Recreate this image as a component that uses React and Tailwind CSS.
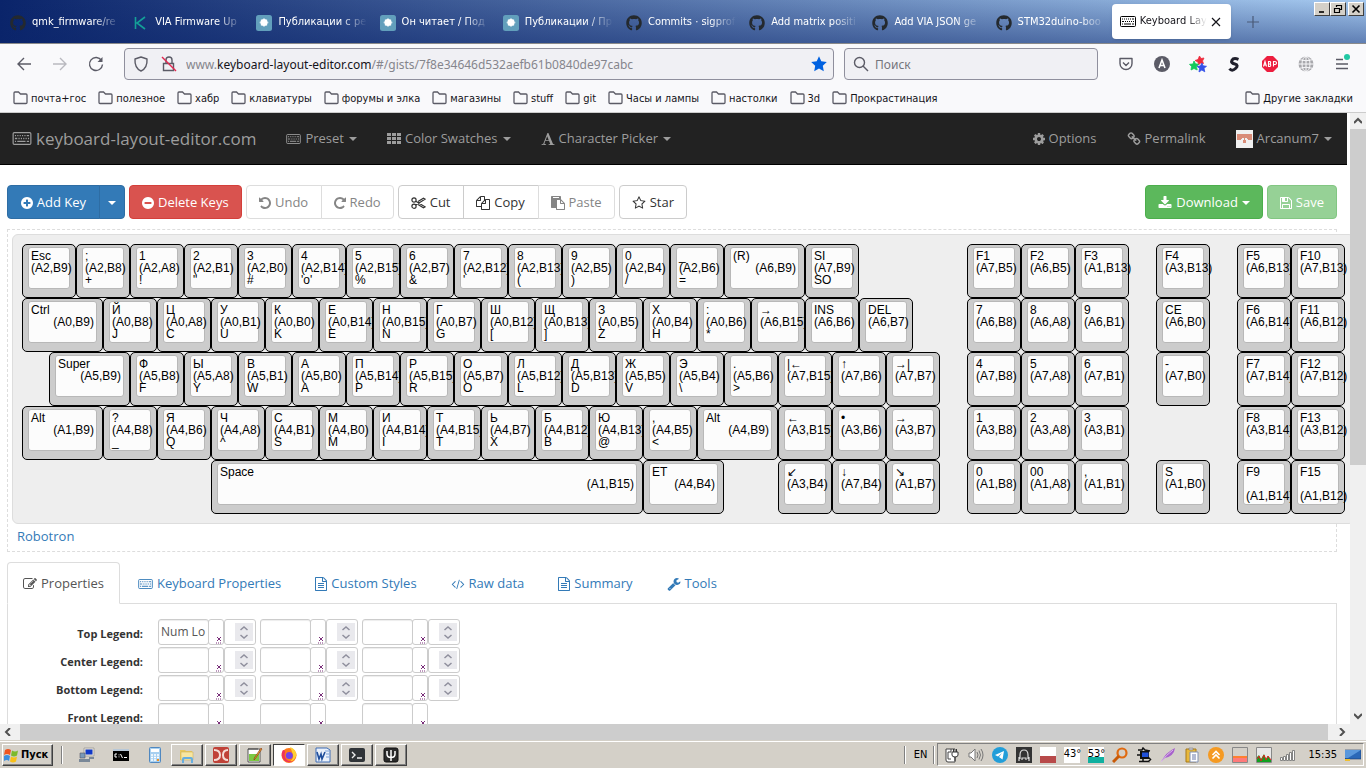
import { FaGithub } from 'react-icons/fa';

// Legends of a key: [top, middle, bottom]. `u` is the width in key units,
// an entry that is just a number is an empty gap of that many units.
const UNIT = 54;

const k = (top, middle = '', bottom = '', u = 1) => ({ legends: [top, middle, bottom], u });

const ROWS = [
  [
    k('Esc', '(A2,B9)'), k(';', '(A2,B8)', '+'), k('1', '(A2,A8)', '!'), k('2', '(A2,B1)', '"'),
    k('3', '(A2,B0)', '#'), k('4', '(A2,B14)', "'o'"), k('5', '(A2,B15)', '%'), k('6', '(A2,B7)', '&'),
    k('7', '(A2,B12)', "'"), k('8', '(A2,B13)', '('), k('9', '(A2,B5)', ')'), k('0', '(A2,B4)', '/'),
    k('_', '(A2,B6)', '='), k('(R)', '(A6,B9)', '', 1.5), k('SI', '(A7,B9)', 'SO'),
    2, k('F1', '(A7,B5)'), k('F2', '(A6,B5)'), k('F3', '(A1,B13)'),
    0.5, k('F4', '(A3,B13)'), 0.5, k('F5', '(A6,B13)'), k('F10', '(A7,B13)'),
  ],
  [
    k('Ctrl', '(A0,B9)', '', 1.5), k('Й', '(A0,B8)', 'J'), k('Ц', '(A0,A8)', 'C'), k('У', '(A0,B1)', 'U'),
    k('К', '(A0,B0)', 'K'), k('Е', '(A0,B14)', 'E'), k('Н', '(A0,B15)', 'N'), k('Г', '(A0,B7)', 'G'),
    k('Ш', '(A0,B12)', '['), k('Щ', '(A0,B13)', ']'), k('З', '(A0,B5)', 'Z'), k('Х', '(A0,B4)', 'H'),
    k(':', '(A0,B6)', '*'), k('→', '(A6,B15)'), k('INS', '(A6,B6)'), k('DEL', '(A6,B7)'),
    1, k('7', '(A6,B8)'), k('8', '(A6,A8)'), k('9', '(A6,B1)'),
    0.5, k('CE', '(A6,B0)'), 0.5, k('F6', '(A6,B14)'), k('F11', '(A6,B12)'),
  ],
  [
    0.5, k('Super', '(A5,B9)', '', 1.5), k('Ф', '(A5,B8)', 'F'), k('Ы', '(A5,A8)', 'Y'), k('В', '(A5,B1)', 'W'),
    k('А', '(A5,B0)', 'A'), k('П', '(A5,B14)', 'P'), k('Р', '(A5,B15)', 'R'), k('О', '(A5,B7)', 'O'),
    k('Л', '(A5,B12)', 'L'), k('Д', '(A5,B13)', 'D'), k('Ж', '(A5,B5)', 'V'), k('Э', '(A5,B4)', '\\'),
    k('.', '(A5,B6)', '>'), k('|←', '(A7,B15)'), k('↑', '(A7,B6)'), k('→|', '(A7,B7)'),
    0.5, k('4', '(A7,B8)'), k('5', '(A7,A8)'), k('6', '(A7,B1)'),
    0.5, k('-', '(A7,B0)'), 0.5, k('F7', '(A7,B14)'), k('F12', '(A7,B12)'),
  ],
  [
    k('Alt', '(A1,B9)', '', 1.5), k('?', '(A4,B8)', '_'), k('Я', '(A4,B6)', 'Q'), k('Ч', '(A4,A8)', '^'),
    k('С', '(A4,B1)', 'S'), k('М', '(A4,B0)', 'M'), k('И', '(A4,B14)', 'I'), k('Т', '(A4,B15)', 'T'),
    k('Ь', '(A4,B7)', 'X'), k('Б', '(A4,B12)', 'B'), k('Ю', '(A4,B13)', '@'), k(',', '(A4,B5)', '<'),
    k('Alt', '(A4,B9)', '', 1.5), k('←', '(A3,B15)'), k('•', '(A3,B6)'), k('→', '(A3,B7)'),
    0.5, k('1', '(A3,B8)'), k('2', '(A3,A8)'), k('3', '(A3,B1)'),
    2, k('F8', '(A3,B14)'), k('F13', '(A3,B12)'),
  ],
  [
    3.5, k('Space', '(A1,B15)', '', 8), k('ET', '(A4,B4)', '', 1.5),
    1, k('↙', '(A3,B4)'), k('↓', '(A7,B4)'), k('↘', '(A1,B7)'),
    0.5, k('0', '(A1,B8)'), k('00', '(A1,A8)'), k(',', '(A1,B1)'),
    0.5, k('S', '(A1,B0)'), 0.5, k('F9', '', '(A1,B14)'), k('F15', '', '(A1,B12)'),
  ],
];

const PATHS = {
  plus: 'M1344 960v-128q0-26-19-45t-45-19h-256v-256q0-26-19-45t-45-19h-128q-26 0-45 19t-19 45v256h-256q-26 0-45 19t-19 45v128q0 26 19 45t45 19h256v256q0 26 19 45t45 19h128q26 0 45-19t19-45v-256h256q26 0 45-19t19-45zm320-64q0 209-103 385.5t-279.5 279.5-385.5 103-385.5-103-279.5-279.5-103-385.5 103-385.5 279.5-279.5 385.5-103 385.5 103 279.5 279.5 103 385.5z',
  minus: 'M1344 960v-128q0-26-19-45t-45-19h-768q-26 0-45 19t-19 45v128q0 26 19 45t45 19h768q26 0 45-19t19-45zm320-64q0 209-103 385.5t-279.5 279.5-385.5 103-385.5-103-279.5-279.5-103-385.5 103-385.5 279.5-279.5 385.5-103 385.5 103 279.5 279.5 103 385.5z',
  undo: 'M1664 896q0 156-61 298t-164 245-245 164-298 61q-172 0-327-72.5t-264-204.5q-7-10-6.5-22.5t8.5-20.5l137-138q10-9 25-9 16 2 23 12 73 95 179 147t225 52q104 0 198.5-40.5t163.5-109.5 109.5-163.5 40.5-198.5-40.5-198.5-109.5-163.5-163.5-109.5-198.5-40.5q-98 0-188 35.5t-160 101.5l137 138q31 30 14 69-17 40-59 40h-448q-26 0-45-19t-19-45v-448q0-42 40-59 39-17 69 14l130 129q107-101 244.5-156.5t284.5-55.5q156 0 298 61t245 164 164 245 61 298z',
  redo: 'M1664 256v448q0 26-19 45t-45 19h-448q-42 0-59-40-17-39 14-69l138-138q-148-137-349-137-104 0-198.5 40.5t-163.5 109.5-109.5 163.5-40.5 198.5 40.5 198.5 109.5 163.5 163.5 109.5 198.5 40.5q119 0 225-52t179-147q7-10 23-12 15 0 25 9l137 138q9 8 9.5 20.5t-7.5 22.5q-109 132-264 204.5t-327 72.5q-156 0-298-61t-245-164-164-245-61-298 61-298 164-245 245-164 298-61q147 0 284.5 55.5t244.5 156.5l130-129q29-31 70-14 39 17 39 59z',
  cog: 'M1152 896q0-106-75-181t-181-75-181 75-75 181 75 181 181 75 181-75 75-181zm512-109v222q0 12-8 23t-20 13l-185 28q-19 54-39 91 35 50 107 138 10 12 10 25t-9 23q-27 37-99 108t-94 71q-12 0-26-9l-138-108q-44 23-91 38-16 136-29 186-7 28-36 28h-222q-14 0-24.5-8.5t-11.5-21.5l-28-184q-49-16-90-37l-141 107q-10 9-25 9-14 0-25-11-126-114-165-168-7-10-7-23 0-12 8-23 15-21 51-66.5t54-70.5q-27-50-41-99l-183-27q-13-2-21-12.5t-8-23.5v-222q0-12 8-23t19-13l186-28q14-46 39-92-40-57-107-138-10-12-10-24 0-10 9-23 26-36 98.5-107.5t94.5-71.5q13 0 26 10l138 107q44-23 91-38 16-136 29-186 7-28 36-28h222q14 0 24.5 8.5t11.5 21.5l28 184q49 16 90 37l142-107q9-9 24-9 13 0 25 10 129 119 165 170 7 8 7 22 0 12-8 23-15 21-51 66.5t-54 70.5q26 50 41 98l183 28q13 2 21 12.5t8 23.5z',
  font: 'M789 559l-170 450q33 0 136.500 2t160.500 2q19 0 57-2-87-253-184-452zm-725 1105l2-79q23-7 56-12.500t57-10.500 49.500-14.500 44.500-29 31-50.500l237-616 280-724h128q8 14 11 21l205 480q33 78 106 257.500t114 274.500q15 34 58 144.500t72 168.500q20 45 35 57 19 15 88 29.500t84 20.500q6 38 6 57 0 5-.5 13.500t-.5 12.500q-63 0-190-8t-191-8q-76 0-215 7t-178 8q0-43 4-78l131-28q1 0 12.500-2.500t15.500-3.500 14.500-4.500 15-6.500 11-8 9-11 2.500-14q0-16-31-96.500t-72-177.500-42-100l-450-2q-26 58-76.500 195.500t-50.500 162.500q0 22 14 37.500t43.500 24.500 48.500 13.500 57 8.500 41 4q1 19 1 58 0 9-2 27-58 0-174.500-10t-174.500-10q-8 0-26.500 4t-21.500 4q-80 14-188 14z',
  link: 'M1520 1216q0-40-28-68l-208-208q-28-28-68-28-42 0-72 32 3 3 19 18.500t21.500 21.500 15 19 13 25.500 3.500 27.500q0 40-28 68t-68 28q-15 0-27.500-3.500t-25.500-13-19-15-21.500-21.500-18.500-19q-33 31-33 73 0 40 28 68l206 207q27 27 68 27 40 0 68-26l147-146q28-28 28-67zm-703-705q0-40-28-68l-206-207q-28-28-68-28-39 0-68 27l-147 146q-28 28-28 67 0 40 28 68l208 208q27 27 68 27 42 0 72-31-3-3-19-18.500t-21.500-21.500-15-19-13-25.500-3.500-27.500q0-40 28-68t68-28q15 0 27.500 3.500t25.500 13 19 15 21.500 21.500 18.500 19q33-31 33-73zm895 705q0 120-85 203l-147 146q-83 83-203 83-121 0-204-85l-206-207q-83-83-83-203 0-123 88-209l-88-88q-86 88-208 88-120 0-204-84l-208-208q-84-84-84-204t85-203l147-146q83-83 203-83 121 0 204 85l206 207q83 83 83 203 0 123-88 209l88 88q86-88 208-88 120 0 204 84l208 208q84 84 84 204z',
  star: 'M1201 1004l306-297-422-62-189-382-189 382-422 62 306 297-73 421 378-199 377 199zm527-357q0 22-26 48l-363 354 86 500q1 7 1 20 0 50-41 50-19 0-40-12l-449-236-449 236q-22 12-40 12-21 0-31.5-14.5t-10.5-35.5q0-6 2-20l86-500-364-354q-25-27-25-48 0-37 56-46l502-73 225-455q19-41 49-41t49 41l225 455 502 73q56 9 56 46z',
  download: 'M1344 1344q0-26-19-45t-45-19-45 19-19 45 19 45 45 19 45-19 19-45zm256 0q0-26-19-45t-45-19-45 19-19 45 19 45 45 19 45-19 19-45zm128-224v320q0 40-28 68t-68 28h-1472q-40 0-68-28t-28-68v-320q0-40 28-68t68-28h465l135 136q58 56 136 56t136-56l136-136h464q40 0 68 28t28 68zm-325-569q17 41-14 70l-448 448q-18 19-45 19t-45-19l-448-448q-31-29-14-70 17-39 59-39h256v-448q0-26 19-45t45-19h256q26 0 45 19t19 45v448h256q42 0 59 39z',
  code: 'M681 1399l-50 50q-10 10-23 10t-23-10l-466-466q-10-10-10-23t10-23l466-466q10-10 23-10t23 10l50 50q10 10 10 23t-10 23l-393 393 393 393q10 10 10 23t-10 23zm591-1067l-373 1291q-4 13-15.5 19.5t-23.5 2.5l-62-17q-13-4-19.5-15.5t-2.5-24.5l373-1291q4-13 15.5-19.5t23.5-2.5l62 17q13 4 19.5 15.5t2.5 24.5zm657 651l-466 466q-10 10-23 10t-23-10l-50-50q-10-10-10-23t10-23l393-393-393-393q-10-10-10-23t10-23l50-50q10-10 23-10t23 10l466 466q10 10 10 23t-10 23z',
  wrench: 'M448 1472q0-26-19-45t-45-19-45 19-19 45 19 45 45 19 45-19 19-45zm644-420l-682 682q-37 37-90 37-52 0-91-37l-106-108q-38-36-38-90 0-53 38-91l681-681q39 98 114.5 173.5t173.5 114.5zm634-435q0 39-23 106-47 134-164.5 217.5t-258.5 83.5q-185 0-316.5-131.5t-131.5-316.5 131.5-316.5 316.5-131.5q58 0 121.5 16.5t107.5 46.5q16 11 16 28t-16 28l-293 169v224l193 107q5-3 79-48.5t135.5-81 70.5-35.5q15 0 23.5 10t8.5 25z',
  edit: 'M888 1184l116-116-152-152-116 116v56h96v96h56zm440-720q-16-16-33 1l-350 350q-17 17-1 33t33-1l350-350q17-17 1-33zm80 594v190q0 119-84.5 203.5t-203.5 84.5h-832q-119 0-203.5-84.5t-84.5-203.5v-832q0-119 84.5-203.5t203.5-84.5h832q63 0 117 25 15 7 18 23 3 17-9 29l-49 49q-14 14-32 8-23-6-45-6h-832q-66 0-113 47t-47 113v832q0 66 47 113t113 47h832q66 0 113-47t47-113v-126q0-13 9-22l64-64q15-15 35-7t20 29zm-96-738l288 288-672 672h-288v-288zm444 132l-92 92-288-288 92-92q28-28 68-28t68 28l152 152q28 28 28 68t-28 68z',
  file: 'M1596 380q28 28 48 76t20 88v1152q0 40-28 68t-68 28h-1344q-40 0-68-28t-28-68v-1600q0-40 28-68t68-28h896q40 0 88 20t76 48zm-444-244v376h376q-10-29-22-41l-313-313q-12-12-41-22zm384 1528v-1024h-416q-40 0-68-28t-28-68v-416h-768v1536h1280zm-1024-864q0-14 9-23t23-9h704q14 0 23 9t9 23v64q0 14-9 23t-23 9h-704q-14 0-23-9t-9-23v-64zm736 224q14 0 23 9t9 23v64q0 14-9 23t-23 9h-704q-14 0-23-9t-9-23v-64q0-14 9-23t23-9h704zm0 256q14 0 23 9t9 23v64q0 14-9 23t-23 9h-704q-14 0-23-9t-9-23v-64q0-14 9-23t23-9h704z',
  copy: 'M1696 384q40 0 68 28t28 68v1216q0 40-28 68t-68 28h-960q-40 0-68-28t-28-68v-288h-544q-40 0-68-28t-28-68v-672q0-40 20-88t48-76l408-408q28-28 76-48t88-20h416q40 0 68 28t28 68v328q68-40 128-40h416zm-544 213l-299 299h299v-299zm-640-384l-299 299h299v-299zm196 647l316-316v-416h-384v416q0 40-28 68t-68 28h-416v640h512v-256q0-40 20-88t48-76zm956 804v-1152h-384v416q0 40-28 68t-68 28h-416v640h896z',
  paste: 'M768 1664h896v-640h-416q-40 0-68-28t-28-68v-416h-384v1152zm256-1440v-64q0-13-9.5-22.5t-22.5-9.5h-704q-13 0-22.5 9.5t-9.5 22.5v64q0 13 9.5 22.5t22.5 9.5h704q13 0 22.5-9.5t9.5-22.5zm256 672h299l-299-299v299zm512 128v672q0 40-28 68t-68 28h-960q-40 0-68-28t-28-68v-160h-544q-40 0-68-28t-28-68v-1344q0-40 28-68t68-28h1088q40 0 68 28t28 68v328q21 13 36 28l408 408q28 28 48 76t20 88z',
  save: 'M512 1536h768v-384h-768v384zm896 0h128v-896q0-14-10-38.5t-20-34.5l-281-281q-10-10-34-20t-39-10v416q0 40-28 68t-68 28h-576q-40 0-68-28t-28-68v-416h-128v1280h128v-416q0-40 28-68t68-28h832q40 0 68 28t28 68v416zm-384-928v-320q0-13-9.5-22.5t-22.5-9.5h-192q-13 0-22.5 9.5t-9.5 22.5v320q0 13 9.5 22.5t22.5 9.5h192q13 0 22.5-9.5t9.5-22.5zm640 32v928q0 40-28 68t-68 28h-1344q-40 0-68-28t-28-68v-1344q0-40 28-68t68-28h928q40 0 88 20t76 48l280 280q28 28 48 76t20 88z',
};

// Glyphs on a 1792 grid: narrow ones are 12px wide, full ones 14px
function Narrow({ name }) {
  return (
    <svg viewBox="128 0 1536 1792" className="h-3.5 w-3 shrink-0" fill="currentColor">
      <path d={PATHS[name]} />
    </svg>
  );
}

function Wide({ name, box = '0 0 1792 1792' }) {
  return (
    <svg viewBox={box} className="h-3.5 w-3.5 shrink-0" fill="currentColor">
      <path d={PATHS[name]} />
    </svg>
  );
}

function KeyboardIcon({ className = 'h-[10px] w-[15px]' }) {
  return (
    <svg viewBox="0 0 16 11" className={`shrink-0 ${className}`} fill="none" stroke="currentColor">
      <rect x="0.5" y="0.5" width="15" height="10" rx="1" />
      <path d="M2 3h1m1 0h1m1 0h1m1 0h1m1 0h1m1 0h2M2 5.5h2m1 0h1m1 0h1m1 0h1m1 0h1m1 0h1M2 8h1m1 0h7m1 0h2" strokeWidth="1.1" />
    </svg>
  );
}

function GridIcon() {
  return (
    <svg viewBox="0 0 14 11" className="h-[11px] w-3.5 shrink-0" fill="currentColor">
      {[0, 5, 10].map((x) => [0, 4, 8].map((y) => <rect key={`${x}-${y}`} x={x} y={y} width="4" height="3" />))}
    </svg>
  );
}

function CutIcon() {
  return (
    <svg viewBox="0 0 15 14" className="h-3.5 w-[15px] shrink-0" fill="none" stroke="currentColor" strokeWidth="1.2">
      <circle cx="3" cy="4" r="2.1" />
      <circle cx="3" cy="10.2" r="2.1" />
      <path d="M4.8 5.2 14 10.8l-1.6 1L7 8.5M4.8 9 14 3.2l-1.6-1L7 5.5" />
    </svg>
  );
}

function Caret() {
  return <span className="block h-0 w-0 shrink-0 border-x-4 border-t-4 border-x-transparent" />;
}

/* ---------- browser chrome ---------- */

function HabrIcon() {
  return (
    <svg viewBox="0 0 16 16" className="h-4 w-4 shrink-0">
      <rect width="16" height="16" rx="2.5" fill="#629fbc" />
      <circle cx="8" cy="7.500" r="3.600" fill="#fff" />
      <path d="M8 3v9M3.500 7.500h9M5 4.500l6 6M11 4.500l-6 6" stroke="#fff" strokeWidth="1.500" strokeOpacity=".5" />
    </svg>
  );
}

function ViaIcon() {
  return (
    <svg viewBox="0 0 16 16" className="h-4 w-4 shrink-0" fill="none" stroke="#14a098" strokeWidth="1.6">
      <path d="M2.500 2v12M12 2 4 8l8 6" />
    </svg>
  );
}

const HubIcon = () => <FaGithub className="h-4 w-4 shrink-0 text-[#24292e]" />;

const TABS = [
  [HubIcon, 'qmk_firmware/re'],
  [ViaIcon, 'VIA Firmware Up'],
  [HabrIcon, 'Публикации с ре'],
  [HabrIcon, 'Он читает / Под'],
  [HabrIcon, 'Публикации / Пр'],
  [HubIcon, 'Commits · sigprof'],
  [HubIcon, 'Add matrix positi'],
  [HubIcon, 'Add VIA JSON ge'],
  [HubIcon, 'STM32duino-boo'],
];

const FADE = 'min-w-0 flex-1 overflow-hidden whitespace-nowrap [mask-image:linear-gradient(to_right,black_70%,transparent)]';

function WindowButton({ label, children }) {
  return (
    <button
      type="button"
      aria-label={label}
      className="flex h-3.5 w-4 items-center justify-center border border-white border-r-[#404040] border-b-[#404040] bg-[#d4d0c8] text-black"
    >
      <svg viewBox="0 0 10 10" className="h-2.5 w-2.5" fill="none" stroke="currentColor" strokeWidth="1.6">
        {children}
      </svg>
    </button>
  );
}

function TabStrip() {
  return (
    <div className="flex h-11 shrink-0 border-b border-[#8a8a8a] bg-[linear-gradient(to_bottom,transparent,rgba(10,36,106,0.45)),linear-gradient(to_right,#0a246a,#a6caf0)] text-[11px]">
      <div className="grid min-w-0 flex-1 grid-cols-10 pl-px">
        {TABS.map(([Icon, title], i) => (
          <button key={i} type="button" className="flex min-w-0 items-center gap-1.5 pt-0.5 pl-[9px] pr-1 text-left text-white">
            <Icon />
            <span className={FADE}>{title}</span>
          </button>
        ))}
        <div className="flex min-w-0 px-0.5 py-1">
          <div className="flex min-w-0 flex-1 items-center gap-1 rounded bg-white pl-2 pr-2.5 text-[#15141a] shadow">
            <KeyboardIcon className="h-[11px] w-4 text-black" />
            <button type="button" className={`text-left ${FADE}`}>Keyboard Layo</button>
            <button type="button" aria-label="Закрыть вкладку">
              <svg viewBox="0 0 10 10" className="h-2.5 w-2.5" stroke="currentColor" strokeWidth="1.2">
                <path d="M1 1l8 8M9 1 1 9" />
              </svg>
            </button>
          </div>
        </div>
      </div>
      <div className="flex w-[133px] shrink-0 justify-between pl-3.5 pr-0.5">
        <button type="button" aria-label="Новая вкладка" className="text-[#4a5a78]">
          <svg viewBox="0 0 12 12" className="h-3 w-3" stroke="currentColor" strokeWidth="1.2">
            <path d="M6 0v12M0 6h12" />
          </svg>
        </button>
        <div className="flex pt-0.5">
          <WindowButton label="Свернуть"><path d="M2 8h5" /></WindowButton>
          <WindowButton label="Восстановить">
            <path d="M3.500 3V1.500h5v4H7M1.500 4.500h5v4h-5z" strokeWidth="1.2" />
          </WindowButton>
          <span className="w-0.5" />
          <WindowButton label="Закрыть"><path d="M1.500 1.500l7 7M8.500 1.500l-7 7" /></WindowButton>
        </div>
      </div>
    </div>
  );
}

function ToolButton({ label, className = '', children }) {
  return (
    <button type="button" aria-label={label} className={`flex h-8 w-9 items-center justify-center text-[#5b5b66] ${className}`}>
      <svg viewBox="0 0 16 16" className="h-4 w-4 overflow-visible" fill="none" stroke="currentColor" strokeWidth="1.4">
        {children}
      </svg>
    </button>
  );
}

function AddressBar() {
  return (
    <div className="flex h-10 shrink-0 items-center bg-[#f9f9fb] px-1.5">
      <ToolButton label="Назад"><path d="M15 8H2M8 2 2 8l6 6" /></ToolButton>
      <ToolButton label="Вперёд" className="opacity-40"><path d="M1 8h13M8 2l6 6-6 6" /></ToolButton>
      <ToolButton label="Обновить">
        <path d="M13.500 4.500A6.500 6.500 0 1 0 14.500 8.500" />
        <path d="M14.500 1v5h-5z" fill="currentColor" stroke="none" />
      </ToolButton>
      <div className="ml-2.5 flex h-8 min-w-0 flex-1 items-center rounded border border-[#8f8f9d] bg-[#f0f0f4] pl-2 pr-1.5">
        <svg viewBox="0 0 16 16" className="h-4 w-4 shrink-0" fill="none" stroke="#5b5b66" strokeWidth="1.4">
          <path d="M8 1l6 2c.4 6-1.500 10-6 12C3.500 13 1.600 9 2 3z" strokeLinejoin="round" />
        </svg>
        <svg viewBox="0 0 16 16" className="ml-3 mr-[9px] h-4 w-4 shrink-0" fill="none" stroke="#5b5b66" strokeWidth="1.4">
          <path d="M2.500 7.500h10v7h-10zM5 7.500V4a3 3 0 0 1 6 0v3.500" />
          <path d="M1 1l14 14" stroke="#e22850" />
        </svg>
        <div role="textbox" aria-label="Адрес" className="min-w-0 flex-1 overflow-hidden pt-0.5 whitespace-nowrap font-['Noto_Sans',sans-serif] text-xs text-[#85858c]">
          www.<span className="text-[#15141a]">keyboard-layout-editor.com</span>/#/gists/7f8e34646d532aefb61b0840de97cabc
        </div>
        <button type="button" aria-label="Изменить закладку">
          <svg viewBox="0 0 16 16" className="h-4 w-4" fill="#0061e0">
            <path d="M8 0.300l2.300 5 5.500.7-4 3.800 1 5.500L8 12.600l-4.800 2.700 1-5.500-4-3.800 5.500-.7z" />
          </svg>
        </button>
      </div>
      <label className="mx-2.5 flex h-8 w-[254px] items-center gap-1.5 rounded border border-[#8f8f9d] bg-[#f0f0f4] px-2 text-[#5b5b66]">
        <svg viewBox="0 0 16 16" className="h-4 w-4 shrink-0" fill="none" stroke="currentColor" strokeWidth="1.4">
          <circle cx="6.500" cy="6.500" r="5" />
          <path d="M10 10l5 5" />
        </svg>
        <input type="search" aria-label="Поиск" placeholder="Поиск" className="w-full min-w-0 bg-transparent pt-0.5 font-['Noto_Sans',sans-serif] text-xs outline-none placeholder:text-[#74747c]" />
      </label>
      <ToolButton label="Pocket">
        <path d="M2 2.500h12v5a6 6 0 0 1-12 0zM5 6.500l3 3 3-3" strokeLinejoin="round" />
      </ToolButton>
      <ToolButton label="Аккаунт">
        <circle cx="8" cy="8" r="8" fill="#5b5b66" stroke="none" />
        <path d="M5 12l3-8 3 8M6.200 9.500h3.600" stroke="#fff" strokeWidth="1.600" />
      </ToolButton>
      <ToolButton label="Расширение">
        <path d="M9.500 0l1.500 2.500 3-.5-1.500 3 1 2.500-3-.5L8.500 9 8 6 5 4.500l3-1z" fill="#ee2b3c" stroke="#ee2b3c" strokeWidth=".8" />
        <path d="M4 5l1.500 2.800 3 .5-2 2.200.7 3.500-3.200-1.500L1 14l.5-3.500L-.5 8.300 3 8z" fill="#13c95b" stroke="#13c95b" strokeWidth=".8" />
        <path d="M12 7l1 2.800 3.500.5-2.500 2 .8 3.500L11.800 14 9 16l.5-3.700L7 10.300l3.300-.3z" fill="#3451e8" stroke="#3451e8" strokeWidth=".8" />
      </ToolButton>
      <ToolButton label="Stylus">
        <path d="M12.500 3.300Q7.500 1.500 6 4.200T8.800 8t.7 4.500-6 .2" stroke="#20202c" strokeWidth="3" />
      </ToolButton>
      <ToolButton label="Adblock Plus">
        <path d="M5 0h6l5 5v6l-5 5H5l-5-5V5z" fill="#ed1e3f" stroke="none" />
        <path d="M1.500 10.500l1.500-5 1.500 5M2 9h2M6.500 5.500v5h1.500q1.500-1.200 0-2.500 1.300-1.200 0-2.500zM6.500 8H8M11.500 10.500v-5q3-.2 3 1.500t-3 1.500" stroke="#fff" strokeWidth="1.100" />
      </ToolButton>
      <ToolButton label="Сеть">
        <circle cx="8" cy="8" r="7.500" fill="#a8a8ac" stroke="none" />
        <path d="M8 0v16M0 8h16M2 3.800q6 2 12 0M2 12.200q6-2 12 0" stroke="#f9f9fb" strokeWidth="1" />
        <ellipse cx="8" cy="8" rx="4" ry="7.500" stroke="#f9f9fb" strokeWidth="1" />
      </ToolButton>
      <ToolButton label="Меню">
        <path d="M2 3.500h7M2 8h12M2 12.500h12" />
        <circle cx="13" cy="1" r="3" fill="#22c8a4" stroke="none" />
      </ToolButton>
    </div>
  );
}

const BOOKMARKS = [
  'почта+гос', 'полезное', 'хабр', 'клавиатуры', 'форумы и элка', 'магазины',
  'stuff', 'git', 'Часы и лампы', 'настолки', '3d', 'Прокрастинация',
];

function Bookmark({ title }) {
  return (
    <button type="button" className="flex items-center gap-[3px] whitespace-nowrap">
      <svg viewBox="0 0 15 14" className="h-3.5 w-[15px]" fill="none" stroke="#5b5b66" strokeWidth="1.300">
        <path d="M1 2q0-1 1-1h3.500l2 2H13q1 0 1 1v7.500q0 1-1 1H2q-1 0-1-1z" />
      </svg>
      <span className="pt-0.5">{title}</span>
    </button>
  );
}

function BookmarksBar() {
  return (
    <div className="flex h-[29px] shrink-0 items-center gap-3 border-b border-[#ccc] bg-[#f9f9fb] px-[13px] text-[11px] text-[#15141a]">
      {BOOKMARKS.map((b) => <Bookmark key={b} title={b} />)}
      <div className="ml-auto"><Bookmark title="Другие закладки" /></div>
    </div>
  );
}

/* ---------- page ---------- */

function NavLink({ icon, children, caret }) {
  return (
    <a href="#" className="flex h-[51px] items-center gap-1 px-[15px] text-[#9d9d9d]">
      {icon}
      <span className={caret ? 'mr-px' : ''}>{children}</span>
      {caret && <Caret />}
    </a>
  );
}

function Navbar() {
  return (
    <nav className="mr-[3px] flex h-[52px] items-center border-b border-black bg-[#222] text-[13px]">
      <a href="#" className="flex items-center gap-1 pl-3 pr-[15px] text-[17px] text-[#9d9d9d]">
        <KeyboardIcon className="h-[13px] w-5" />
        keyboard-layout-editor.com
      </a>
      <NavLink icon={<KeyboardIcon />} caret>Preset</NavLink>
      <NavLink icon={<GridIcon />} caret>Color Swatches</NavLink>
      <NavLink icon={<Wide name="font" />} caret>Character Picker</NavLink>
      <div className="ml-auto flex">
        <NavLink icon={<Narrow name="cog" />}>Options</NavLink>
        <NavLink icon={<Wide name="link" />}>Permalink</NavLink>
        <NavLink
          icon={
            <svg viewBox="0 0 17 18" className="h-[18px] w-[17px]">
              <path d="M0 0h17v18H0z" fill="#f0f0f0" />
              <path d="M1 4h15v6h-4V9H5v1H1z" fill="#d98c78" />
              <path d="M7 8h3v5H7z" fill="#d98c78" />
              <path d="M6 8h2v2H6zM9 8h2v2H9z" fill="#f0f0f0" />
            </svg>
          }
          caret
        >
          Arcanum7
        </NavLink>
      </div>
    </nav>
  );
}

const BTN = 'flex h-[34px] items-center justify-center gap-1 border px-3 pt-0.5';

function Toolbar() {
  return (
    <div className="flex gap-1 text-[13px] text-[#333]">
      <div className="flex text-white">
        <button type="button" className={`${BTN} w-[93px] rounded-l border-[#2e6da4] bg-[#337ab7]`}><Narrow name="plus" />Add Key</button>
        <button type="button" aria-label="Add special key" className="-ml-px flex h-[34px] w-[26px] items-center justify-center rounded-r border border-[#2e6da4] bg-[#337ab7] pt-0.5"><Caret /></button>
      </div>
      <button type="button" className={`${BTN} rounded border-[#d43f3a] bg-[#d9534f] text-white`}><Narrow name="minus" />Delete Keys</button>
      <div className="flex text-[#858585]">
        <button type="button" className={`${BTN} w-[76px] rounded-l border-[#ddd] bg-white`}><Narrow name="undo" />Undo</button>
        <button type="button" className={`${BTN} -ml-px rounded-r border-[#ddd] bg-white`}><Narrow name="redo" />Redo</button>
      </div>
      <div className="flex">
        <button type="button" className={`${BTN} rounded-l border-[#ccc] bg-white`}><CutIcon />Cut</button>
        <button type="button" className={`${BTN} -ml-px w-[76px] border-[#ccc] bg-white`}><Wide name="copy" />Copy</button>
        <button type="button" className={`${BTN} -ml-px rounded-r border-[#ddd] bg-white text-[#858585]`}><Wide name="paste" />Paste</button>
      </div>
      <button type="button" className={`${BTN} rounded border-[#ccc] bg-white`}><Wide name="star" />Star</button>
      <div className="ml-auto flex gap-1 text-white">
        <button type="button" className={`${BTN} rounded border-[#4cae4c] bg-[#5cb85c]`}><Wide name="download" />Download<Caret /></button>
        <button type="button" className={`${BTN} rounded border-[#82c682] bg-[#96d196]`}><Narrow name="save" />Save</button>
      </div>
    </div>
  );
}

function Key({ legends, u }) {
  const [top, middle, bottom] = legends;
  return (
    <div className="h-[54px] shrink-0 rounded-[5px] border border-black bg-[#ccc] px-[5px] pt-0.5" style={{ width: u * UNIT }}>
      <div className="h-[42px] whitespace-nowrap rounded-[3px] border border-[#b8b8b8] bg-[#fcfcfc] p-0.5">
        <div className="h-3">{top}</div>
        <div className={u > 1 ? 'h-3 text-right' : 'h-3'}>{middle}</div>
        <div className="h-3">{bottom}</div>
      </div>
    </div>
  );
}

function Board() {
  return (
    <div className="w-max rounded-md border border-[#ddd] bg-[#eee] p-[9px] font-['Liberation_Sans',Arial,sans-serif] text-xs leading-3 text-black">
      {ROWS.map((row, r) => (
        <div key={r} className="flex h-[54px]">
          {row.map((item, i) =>
            typeof item === 'number'
              ? <div key={i} className="shrink-0" style={{ width: item * UNIT }} />
              : <Key key={i} {...item} />
          )}
        </div>
      ))}
    </div>
  );
}

const PANES = [
  [<Wide name="edit" />, 'Properties'],
  [<KeyboardIcon />, 'Keyboard Properties'],
  [<Narrow name="file" />, 'Custom Styles'],
  [<Wide name="code" box="0 0 2048 1792" />, 'Raw data'],
  [<Narrow name="file" />, 'Summary'],
  [<Wide name="wrench" />, 'Tools'],
];

function PaneTabs() {
  return (
    <div role="tablist" className="flex gap-0.5 border-b border-[#ddd] text-[13px]">
      {PANES.map(([icon, title], i) => (
        <button
          key={title}
          type="button"
          role="tab"
          aria-selected={i === 0}
          className={`-mb-px flex h-[42px] items-center gap-1 rounded-t border px-[15px] pt-0.5 ${
            i === 0 ? 'border-[#ddd] border-b-white bg-white text-[#555]' : 'border-transparent text-[#337ab7]'
          }`}
        >
          {icon}
          {title}
        </button>
      ))}
    </div>
  );
}

function LegendInput({ label, value, size }) {
  return (
    <div className="flex h-[26px] w-[98px]">
      <input
        type="text"
        aria-label={label}
        defaultValue={value}
        className="w-[51px] rounded-[3px] border border-[#ccc] px-0.5 text-xs text-[#555] shadow-[inset_0_1px_1px_rgba(0,0,0,0.075)] outline-none"
      />
      <a href="#" aria-label={`Clear ${label}`} className="-ml-px flex w-4 items-end justify-end rounded-[3px] border border-[#ccc] pr-px text-[#7a2f7a]">
        <svg viewBox="0 0 6 7" className="h-[7px] w-1.5" stroke="currentColor" fill="none">
          <path d="M1 0l4 4M5 0 1 4" />
          <path d="M0 6h6" strokeDasharray="1 1" />
        </svg>
      </a>
      {size && (
        <div className="flex w-8 justify-end rounded-[3px] border border-[#ccc] py-[3px] pr-0.5">
          <input type="number" aria-label={`${label} size`} className="w-2 min-w-0 flex-1 appearance-none outline-none [&::-webkit-inner-spin-button]:appearance-none" />
          <span className="flex w-[18px] flex-col items-center justify-center gap-[3px] bg-[#e9e9ed] text-[#8f8f9d]">
            <svg viewBox="0 0 8 5" className="h-[5px] w-2" fill="none" stroke="currentColor" strokeWidth="1.500"><path d="M0.500 4 4 1l3.500 3" /></svg>
            <svg viewBox="0 0 8 5" className="h-[5px] w-2" fill="none" stroke="currentColor" strokeWidth="1.500"><path d="M0.500 1 4 4l3.500-3" /></svg>
          </span>
        </div>
      )}
    </div>
  );
}

function LegendRow({ name, value = '', size = true }) {
  return (
    <div className="flex h-[26px] gap-1">
      <span className="mr-[11px] w-[135px] text-right text-[11px] leading-[30px] font-bold text-[#333]">{name} Legend:</span>
      {['left', 'center', 'right'].map((pos, i) => (
        <LegendInput key={pos} label={`${name} ${pos} legend`} value={i === 0 ? value : ''} size={size} />
      ))}
    </div>
  );
}

function Page() {
  return (
    <main className="min-w-0 flex-1 overflow-hidden bg-white font-['Open_Sans',sans-serif]">
      <Navbar />
      <div className="pl-[7px] pr-[13px] pt-5">
        <Toolbar />
        <div className="mt-2.5 border border-dashed border-[#ddd] pl-1 pt-1">
          <Board />
          <a href="#" className="ml-[5px] block h-[27px] w-max pt-0.5 text-[13px] leading-5 text-[#337ab7]">Robotron</a>
        </div>
        <div className="mt-2.5">
          <PaneTabs />
          <form className="flex h-80 flex-col gap-0.5 border-x border-[#ddd] pt-[15px]">
            <LegendRow name="Top" value="Num Lo" />
            <LegendRow name="Center" />
            <LegendRow name="Bottom" />
            <LegendRow name="Front" size={false} />
          </form>
        </div>
      </div>
    </main>
  );
}

function ScrollArrow({ label, d, className }) {
  return (
    <button type="button" aria-label={label} className={`flex items-center justify-center bg-[#f0f0f0] text-[#505050] ${className}`}>
      <svg viewBox="0 0 8 8" className="h-2 w-2" fill="none" stroke="currentColor" strokeWidth="2">
        <path d={d} />
      </svg>
    </button>
  );
}

function VerticalScroll() {
  return (
    <div className="flex w-4 shrink-0 flex-col bg-[#f0f0f0]">
      <ScrollArrow label="Вверх" d="M0 6l4-4 4 4" className="h-4" />
      <div className="h-[55%] bg-[#cdcdcd]" />
      <ScrollArrow label="Вниз" d="M0 2l4 4 4-4" className="mt-auto h-4" />
    </div>
  );
}

function HorizontalScroll() {
  return (
    <div className="flex h-4 shrink-0 bg-[#f0f0f0] pr-4">
      <ScrollArrow label="Влево" d="M6 0 2 4l4 4" className="w-5 pr-1" />
      <div className="flex-1 bg-[#cdcdcd]" />
      <ScrollArrow label="Вправо" d="M2 0l4 4-4 4" className="w-[22px] pl-1.5" />
    </div>
  );
}

/* ---------- taskbar ---------- */

function Pic({ children }) {
  return <svg viewBox="0 0 16 16" className="h-4 w-4 shrink-0">{children}</svg>;
}

function Separator() {
  return <span className="block h-[18px] w-0.5 shrink-0 border-l border-[#808080] bg-white" />;
}

const RAISED = 'border border-white border-r-[#404040] border-b-[#404040] shadow-[inset_-1px_-1px_0_#808080]';

const TASKS = [
  ['Проводник', (
    <Pic>
      <path d="M1 3h5l1 1h6v9H1z" fill="#e8c860" />
      <path d="M2 5h12v8H2z" fill="#f7e6a0" stroke="#c8a848" strokeWidth=".5" />
      <path d="M3 16v-4q0-2 2-2h7q2 0 2 2v4h-2v-3q0-1-1-1H6q-1 0-1 1v3z" fill="#66aee0" />
    </Pic>
  )],
  ['Double Commander', (
    <Pic>
      <rect width="16" height="16" rx="2" fill="#c04238" />
      <path d="M1 3q6 0 6 5t-6 5M15 3q-5 0-5 5t5 5" fill="none" stroke="#f5ddd8" strokeWidth="2" />
    </Pic>
  )],
  ['Блокнот', (
    <Pic>
      <path d="M1 2h12v13H1z" fill="#fff" stroke="#555" />
      <path d="M2 7h10v7H2z" fill="#7cc943" />
      <path d="M2 1v2M4 1v2M6 1v2M8 1v2M10 1v2" stroke="#333" strokeWidth=".8" />
      <path d="M15 2 8 12l-1 1 .3-2L14 1z" fill="#f0a030" stroke="#803010" strokeWidth=".6" />
    </Pic>
  )],
  ['Firefox', (
    <Pic>
      <circle cx="8" cy="8.500" r="7.500" fill="#ff7a1a" />
      <path d="M9 0q6 2 6.500 8-2 6-7.500 7 5-3 4-7T9 0z" fill="#ffcf33" />
      <path d="M1 5q-1 6 3 9 4 2.500 8 0-5 1-7-2T4 6 2 3z" fill="#f0325a" />
      <circle cx="8.300" cy="8.500" r="3.500" fill="#7542e5" />
    </Pic>
  )],
  ['Word', (
    <Pic>
      <path d="M1 1h11l3 2v12H1z" fill="#eaf1fb" stroke="#3e6db5" />
      <path d="M10 4h4M11 7h3M11 10h3" stroke="#7aa0d8" />
      <path d="M2 5l2 7 2-5 1 5 3-7" fill="none" stroke="#1f4e9c" strokeWidth="1.600" />
    </Pic>
  )],
  ['Терминал', (
    <Pic>
      <rect y="1" width="16" height="14" rx="2" fill="#303438" />
      <path d="M3 5l3 3-3 3M8 11h5" fill="none" stroke="#eee" strokeWidth="1.400" />
    </Pic>
  )],
  ['QMK Toolbox', (
    <Pic>
      <rect x="1" y="1" width="14" height="14" rx="2" fill="#2b2b2b" stroke="#111" />
      <path d="M8 3v11M4 4v3q0 3.500 4 3.500T12 7V4" fill="none" stroke="#fff" strokeWidth="1.500" />
    </Pic>
  )],
];

function Tray() {
  return (
    <div className="flex h-[23px] items-center gap-2 border border-[#808080] border-r-white border-b-white pl-1.5 pr-0.5">
      <Pic>
        <path d="M2 2h9v13H4q-2 0-2-2z" fill="#fff" stroke="#444" />
        <path d="M7 2v3H4v7h3" fill="none" stroke="#444" />
        <path d="M8 5h6v3q0 2-3 2T8 8zM9.500 2v3M12.500 2v3M11 10v4" fill="#fff" stroke="#333" />
      </Pic>
      <Pic>
        <path d="M1 6h2l4-4v12l-4-4H1z" fill="#fff" stroke="#777" />
        <path d="M9 5q2 3 0 6M11 3.500q3 4.500 0 9M13 2q4 6 0 12" fill="none" stroke="#777" />
      </Pic>
      <Pic>
        <circle cx="8" cy="8" r="8" fill="#229ed9" />
        <path d="M3 8l9-4-1.500 8.500L7 10l3-4-4 3.500z" fill="#fff" />
      </Pic>
      <Pic>
        <path d="M0 0h16v16H0z" fill="#333" />
        <path d="M4 12V8q0-5 4-5t4 5v4M3 10v4M13 10v4M6 13v-2h4v2" fill="none" stroke="#ddd" strokeWidth="1.200" />
      </Pic>
      <Pic><path d="M0 0h16v9H0z" fill="#fff" /><path d="M0 9h16v7H0z" fill="#b84a4a" /></Pic>
      <span className="flex h-4 w-4 items-center justify-center bg-white text-[11px] whitespace-nowrap">43°</span>
      <span className="flex h-4 w-4 items-center justify-center bg-[linear-gradient(#fff_60%,#10b0a0_60%)] text-[11px] whitespace-nowrap">53°</span>
      <Pic>
        <circle cx="10" cy="6" r="4.500" fill="none" stroke="#e06a10" strokeWidth="2.200" />
        <path d="M7 9l-6 6" stroke="#c85a08" strokeWidth="3" />
      </Pic>
      <Pic>
        <path d="M4 4h9v8H4z" fill="#111" />
        <path d="M6 5.500h6.500v4.500H6z" fill="#2050d8" />
        <path d="M2 3h4l1-2 2 2 5 1M3 14.500h11M12 10l2.500 2.500-2 2M1 8h3M7 12v2" fill="none" stroke="#111" strokeWidth="1.500" />
      </Pic>
      <Pic>
        <path d="M1 15Q6 5 15 1 14 9 5 11z" fill="#a862cc" />
        <path d="M1 15Q6 8 13 3" fill="none" stroke="#dcb8ee" />
      </Pic>
      <Pic>
        <path d="M2 2h10v13H2z" fill="#e8b83a" stroke="#a87a18" />
        <path d="M5 1h4v2H5z" fill="#c8c8d0" stroke="#777" strokeWidth=".5" />
        <path d="M6 5h8v10H6z" fill="#fff" stroke="#8090b0" />
        <path d="M8 8h4M8 10h4M8 12h4" stroke="#6878a8" />
      </Pic>
      <Pic>
        <circle cx="8" cy="8" r="8" fill="#f59a22" />
        <path d="M4.500 8 8 4.500 11.500 8M4.500 11.500 8 8l3.500 3.500" fill="none" stroke="#fff" strokeWidth="1.600" />
      </Pic>
      <Pic>
        <path d="M.5.5h15v15H.5z" fill="#d4d0c8" stroke="#888" />
        <path d="M1 9h14v6H1z" fill="#ff7a7a" /><path d="M1 9h14v2H1z" fill="#ff8030" />
      </Pic>
      <Pic>
        <path d="M.5.5h15v15H.5z" fill="#e8e8e8" stroke="#888" />
        <path d="M1 15v-5l2-2 2 4 3-5 2 5 2-3 3 4v2z" fill="#12a020" />
        <path d="M1 12l2-3 2 5 3-6 2 5 2-4 3 4" fill="none" stroke="#e02020" />
      </Pic>
      <Pic>
        <path d="M.5 10.500h2v3h-2zM3.500 9.500h2v4h-2zM6.500 7.500h2v6h-2zM9.500 5.500h2v8h-2zM12.500 3.500h2v10h-2z" fill="#fff" stroke="#777" strokeWidth=".9" />
      </Pic>
      <time className="ml-1 pt-0.5 text-[11px]">15:35</time>
      <Pic>
        <path d="M0 3h16v9H0z" fill="#2a68b8" stroke="#183868" strokeWidth=".6" />
        <path d="M0 3h16L3 11H0z" fill="#5a98dc" />
        <path d="M0 12h5v2H0z" fill="#f0c030" />
      </Pic>
    </div>
  );
}

function Taskbar() {
  return (
    <footer className="flex h-7 shrink-0 items-center border-t border-[#d4d0c8] bg-[#d4d0c8] pr-0.5 text-black shadow-[inset_0_1px_0_#fff]">
      <button type="button" className={`ml-0.5 flex h-[22px] items-center gap-px pl-px pr-1 text-[11px] font-bold ${RAISED}`}>
        <Pic>
          <path d="M1 3q3-2 6 0L6 8Q3 6 0 8z" fill="#ee5522" />
          <path d="M8 3.500q3 2 6 0L13 8.500q-3 2-6 0z" fill="#7cba2c" />
          <path d="M0 9q3-2 6 0l-1 5q-2-2-5 0z" fill="#3a8ee0" />
          <path d="M7 9.500q3 2 6 0l-1 5q-3 2-6 0z" fill="#f8c018" />
        </Pic>
        <span className="pt-0.5">Пуск</span>
      </button>
      <span className="ml-2"><Separator /></span>
      <div className="ml-4 mr-2 flex gap-[18px]">
        <Pic>
          <path d="M5 1h10v8H5z" fill="#e8e4da" stroke="#888" strokeWidth=".6" />
          <path d="M6.500 2.500h7v5h-7z" fill="#1038c8" />
          <path d="M1 6h5v5H1z" fill="#7898b8" stroke="#556" strokeWidth=".6" />
          <path d="M0 12h11v3H0zM10 10h5v2h-5z" fill="#7a8898" />
        </Pic>
        <Pic>
          <path d="M0 2h16v12H0z" fill="#000" /><path d="M0 2h16v2H0z" fill="#b8c8d8" />
          <path d="M4 7H2v3h2M6 7.500v.8M6 9.500v.8M7.500 7l2 4M11 10.500h3" fill="none" stroke="#fff" />
        </Pic>
        <Pic>
          <rect x="2.500" y=".5" width="11" height="15" rx="1" fill="#a8d0f0" stroke="#5088c0" />
          <path d="M4 2h8v3H4z" fill="#fff" />
          <path d="M4 8h8M4 10.500h8M4 13h8" stroke="#fff" strokeWidth="1.500" strokeDasharray="2 1" />
          <path d="M10 12h2v2h-2z" fill="#f09020" />
        </Pic>
      </div>
      <div className="flex gap-0.5">
        {TASKS.map(([title, icon], i) => (
          <button
            key={title}
            type="button"
            aria-label={title}
            className={`flex h-[22px] w-8 items-center justify-center ${
              i === 3 ? 'border border-[#404040] border-r-white border-b-white bg-white' : RAISED
            }`}
          >
            {icon}
          </button>
        ))}
      </div>
      <div className="ml-auto flex items-center">
        <Separator />
        <span className="mr-1.5 ml-2 pt-0.5 text-[11px]">EN</span>
        <Separator />
        <span className="w-0.5" />
        <Tray />
      </div>
    </footer>
  );
}

export default function App() {
  return (
    <div className="flex h-screen flex-col overflow-hidden bg-white font-['DejaVu_Sans_Condensed','DejaVu_Sans',sans-serif]">
      <TabStrip />
      <AddressBar />
      <BookmarksBar />
      <div className="flex min-h-0 flex-1">
        <Page />
        <VerticalScroll />
      </div>
      <HorizontalScroll />
      <Taskbar />
    </div>
  );
}
